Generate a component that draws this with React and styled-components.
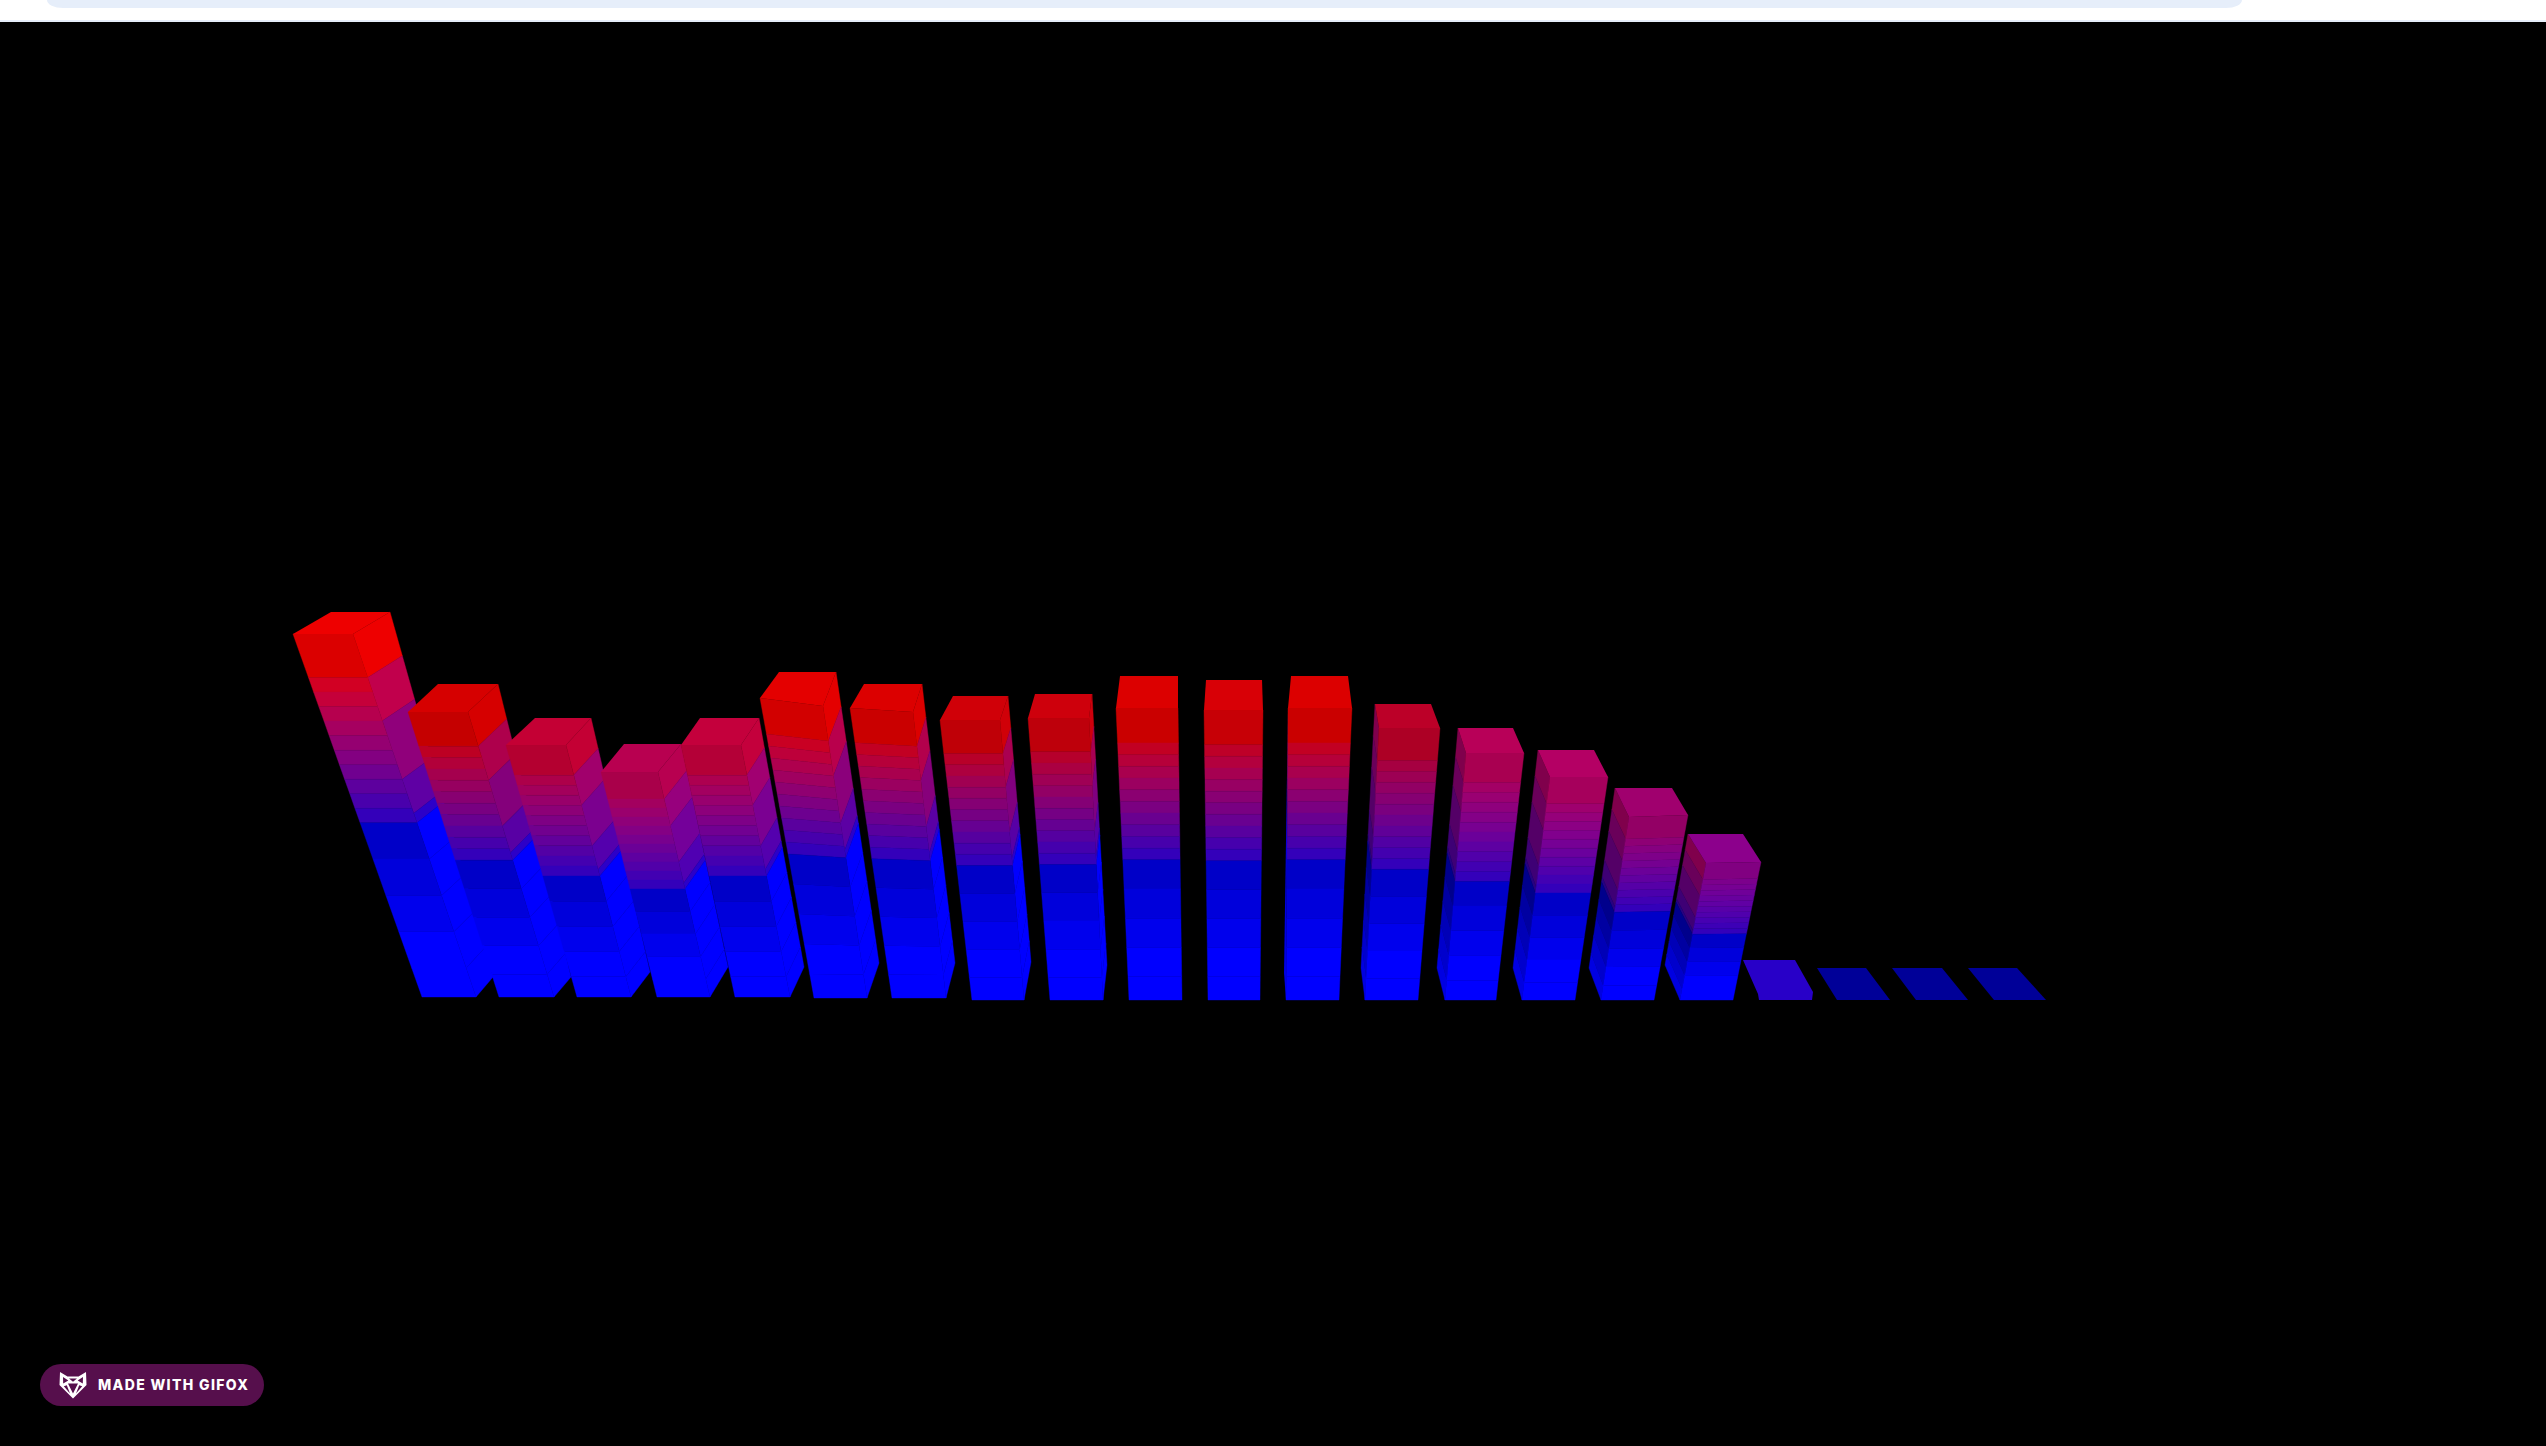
import React from 'react';
import styled, { createGlobalStyle } from 'styled-components';

const Global = createGlobalStyle`
  html, body { margin: 0; padding: 0; background: #fff; }
  #root { width: 2546px; height: 1446px; overflow: hidden; }
`;
const Page = styled.div`
  width: 2546px; height: 1446px; display: flex; flex-direction: column; background: #000;
`;
const TopArea = styled.div`
  height: 20px; flex: none; background: #fff; border-bottom: 2px solid #e6eefa;
  padding: 0 304px 0 47px; display: flex; align-items: flex-start;
`;
const TopPill = styled.div`
  flex: 1; height: 8px; background: #e6eefa; border-radius: 0 0 16px 16px / 0 0 8px 8px;
`;
const Stage = styled.main`
  flex: 1; position: relative; background: #000; overflow: hidden;
`;
const ChartSvg = styled.svg`
  display: block; width: 2546px; height: 1424px;
`;
const Badge = styled.div`
  position: absolute; left: 40px; top: 1342px; width: 224px; height: 42px; box-sizing: border-box;
  padding-left: 19px; border-radius: 21px; background: #560f4c; display: flex; align-items: center; gap: 11px;
`;
const BadgeText = styled.span`
  font: 800 14px/1 Inter, "Liberation Sans", sans-serif; letter-spacing: 1.35px; color: #fff; white-space: nowrap;
`;

const lerp = (a, b, t) => a + (b - a) * t;
const mixPt = (a, b, t) => [lerp(a[0], b[0], t), lerp(a[1], b[1], t)];
const rgb = (r, g, b) => `rgb(${Math.round(r)},${Math.round(g)},${Math.round(b)})`;
const pts = (...list) => list.map((p) => p.map((v) => v.toFixed(1)).join(',')).join(' ');

// f = front, b = back, l/r = left/right; the g prefix is the same corner on the ground
const BARS = [
  { fl:[293,634], fr:[353,634], bl:[331,612], br:[390,612], gfl:[422,997], gfr:[476,997], gbr:[493,977], top:[238,0,0], side:'lit' },
  { fl:[408,712], fr:[468,712], bl:[438,684], br:[498,684], gfl:[499,997], gfr:[554,997], gbr:[571,977], top:[214,0,0], side:'lit' },
  { fl:[506,745], fr:[566,745], bl:[535,718], br:[591,718], gfl:[577,997], gfr:[631,997], gbr:[650,972], top:[196,0,52], side:'lit' },
  { fl:[601,772], fr:[658,772], bl:[624,744], br:[681,744], gfl:[657,997], gfr:[710,997], gbr:[728,967], top:[184,0,80], side:'lit' },
  { fl:[681,745], fr:[741,745], bl:[700,718], br:[759,718], gfl:[735,997], gfr:[790,997], gbr:[804,967], top:[196,0,60], side:'lit' },
  { fl:[760,698], fr:[823,706], bl:[779,672], br:[836,672], gfl:[814,998], gfr:[867,998], gbr:[879,963], top:[228,0,0], side:'lit' },
  { fl:[850,708], fr:[913,712], bl:[864,684], br:[922,684], gfl:[892,998], gfr:[946,998], gbr:[955,963], top:[220,0,0], side:'lit' },
  { fl:[940,720], fr:[1000,720], bl:[953,696], br:[1008,696], gfl:[972,1000], gfr:[1024,1000], gbr:[1031,962], top:[208,0,8], side:'lit' },
  { fl:[1028,718], fr:[1089,718], bl:[1035,694], br:[1092,694], gfl:[1050,1000], gfr:[1103,1000], gbr:[1107,965], top:[206,0,12], side:'lit' },
  { fl:[1116,708], fr:[1178,708], bl:[1120,676], br:[1178,676], gfl:[1129,1000], gfr:[1182,1000], top:[220,0,0], side:'none' },
  { fl:[1204,710], fr:[1263,710], bl:[1206,680], br:[1262,680], gfl:[1208,1000], gfr:[1260,1000], top:[216,0,6], side:'none' },
  { fl:[1288,708], fr:[1352,708], bl:[1291,676], br:[1348,676], gfl:[1286,1000], gfr:[1339,1000], gbl:[1284,973], top:[220,0,0], side:'none' },
  { fl:[1379,728], fr:[1440,728], bl:[1375,704], br:[1431,704], gfl:[1365,1000], gfr:[1418,1000], gbl:[1361,968], top:[188,0,40], side:'dim' },
  { fl:[1466,753], fr:[1524,753], bl:[1458,728], br:[1513,728], gfl:[1445,1000], gfr:[1496,1000], gbl:[1437,968], top:[184,0,88], side:'dim' },
  { fl:[1550,777], fr:[1608,777], bl:[1538,750], br:[1594,750], gfl:[1522,1000], gfr:[1575,1000], gbl:[1513,968], top:[180,0,100], side:'dim' },
  { fl:[1629,817], fr:[1688,815], bl:[1615,788], br:[1672,788], gfl:[1601,1000], gfr:[1654,1000], gbl:[1589,968], top:[160,0,110], side:'dim' },
  { fl:[1706,863], fr:[1761,862], bl:[1688,834], br:[1743,834], gfl:[1680,1000], gfr:[1733,1000], gbl:[1665,965], top:[140,0,140], side:'dim' },
];

const FLATS = [
  { p:[[1743,960],[1795,960],[1813,992],[1812,1000],[1759,1000],[1758,994]], c:'#2800c8' },
  { p:[[1817,968],[1866,968],[1890,1000],[1837,1000]], c:'#000098' },
  { p:[[1892,968],[1942,968],[1968,1000],[1916,1000]], c:'#000098' },
  { p:[[1968,968],[2017,968],[2046,1000],[1994,1000]], c:'#000098' },
];

const SPLIT = 0.52; // share of a bar's height, measured from the top, that runs from its top colour to violet

// front face: a thick first band, then narrow ones
const FRONT_EDGES = (() => {
  const units = [3, 1, 1, 1, 1, 1, 1, 1, 1, 1, 1];
  const total = units.reduce((a, b) => a + b, 0);
  let run = 0;
  const list = [0];
  units.forEach((u) => { run += u; list.push((run / total) * SPLIT); });
  return list;
})();
// lit side face: a few wide bands
const SIDE_EDGES = [0, 0.23, 0.46, 0.77, 0.95, 1].map((v) => v * SPLIT);
const LOWER_EDGES = [SPLIT, 0.62, 0.72, 0.82, 0.92, 1];

function Bands({ tl, tr, gl, gr, edges, colorAt }) {
  const out = [];
  for (let i = 0; i < edges.length - 1; i++) {
    const a = mixPt(tl, gl, edges[i]);
    const b = mixPt(tr, gr, edges[i]);
    const c = mixPt(tr, gr, edges[i + 1]);
    const d = mixPt(tl, gl, edges[i + 1]);
    const fill = colorAt(i / Math.max(1, edges.length - 2));
    out.push(<polygon key={i} points={pts(a, b, c, d)} fill={fill} stroke={fill} strokeWidth="0.4" />);
  }
  return <g>{out}</g>;
}

function Face({ tl, tr, gl, gr, edges, colorAt, blueAt }) {
  return (
    <g>
      <Bands tl={tl} tr={tr} gl={gl} gr={gr} edges={edges} colorAt={colorAt} />
      <Bands tl={tl} tr={tr} gl={gl} gr={gr} edges={LOWER_EDGES} colorAt={blueAt} />
    </g>
  );
}

function Bar({ d }) {
  const [tr, , tb] = d.top;
  const frontColor = (t) =>
    rgb(lerp(tr * 0.92, 52, Math.pow(t, 1.25)), 0, lerp(tb * 0.92, 186, Math.pow(t, 0.72)));
  const frontBlue = (t) => rgb(0, 0, lerp(200, 255, Math.min(1, t * 1.35)));
  let side = null;
  if (d.side === 'lit') {
    side = (
      <Face tl={d.fr} tr={d.br} gl={d.gfr} gr={d.gbr} edges={SIDE_EDGES}
        colorAt={(t) => rgb(lerp(tr, 44, Math.pow(t, 1.05)), 0, lerp(tb, 200, Math.pow(t, 0.7)))}
        blueAt={() => 'rgb(0,0,255)'} />
    );
  } else if (d.side === 'dim') {
    side = (
      <Face tl={d.bl} tr={d.fl} gl={d.gbl} gr={d.gfl} edges={SIDE_EDGES}
        colorAt={(t) => rgb(lerp(128, 40, t), 0, lerp(76, 130, t))}
        blueAt={(t) => rgb(0, 0, lerp(140, 225, t))} />
    );
  } else if (d.gbl) {
    side = <polygon points={pts(d.fl, d.gfl, d.gbl)} fill="#0000e0" />;
  }
  return (
    <g>
      {side}
      <Face tl={d.fl} tr={d.fr} gl={d.gfl} gr={d.gfr} edges={FRONT_EDGES} colorAt={frontColor} blueAt={frontBlue} />
      <polygon points={pts(d.fl, d.fr, d.br, d.bl)} fill={rgb(tr, 0, tb)} />
    </g>
  );
}

function Fox() {
  return (
    <svg width="28" height="28" viewBox="0 0 28 28">
      <path
        fillRule="evenodd"
        fill="#fff"
        d="M1 1 L8.5 5.5 H19.5 L27 1 L27.5 14 L14 27.5 L.5 14 Z
           M4 6 L4.2 12.6 L9.3 9.6 Z
           M24 6 L18.7 9.6 L23.8 12.6 Z
           M10 7.6 L14 10.8 L18 7.6 Z
           M9 12.6 L19 12.6 L14 22.5 Z
           M4.8 15.2 L11 22.6 L7.8 14.2 Z
           M23.2 15.2 L17 22.6 L20.2 14.2 Z"
      />
    </svg>
  );
}

export default function App() {
  return (
    <>
      <Global />
      <Page>
        <TopArea><TopPill /></TopArea>
        <Stage>
          <ChartSvg viewBox="0 22 2546 1424">
            {BARS.map((d, i) => <Bar key={i} d={d} />)}
            {FLATS.map((f, i) => <polygon key={i} points={pts(...f.p)} fill={f.c} />)}
          </ChartSvg>
          <Badge><Fox /><BadgeText>MADE WITH GIFOX</BadgeText></Badge>
        </Stage>
      </Page>
    </>
  );
}
